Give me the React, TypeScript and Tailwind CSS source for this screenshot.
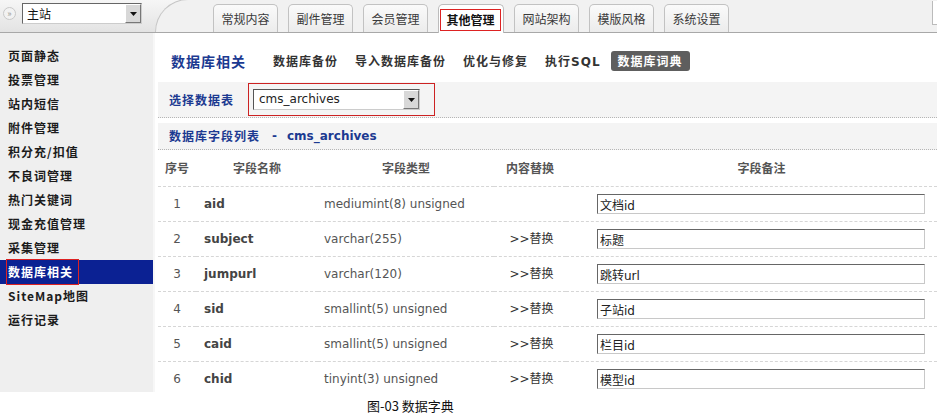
import React from "react";

const topTabs = ["常规内容", "副件管理", "会员管理", "其他管理", "网站架构", "模版风格", "系统设置"];

const menu = [
  "页面静态",
  "投票管理",
  "站内短信",
  "附件管理",
  "积分充/扣值",
  "不良词管理",
  "热门关键词",
  "现金充值管理",
  "采集管理",
  "数据库相关",
  "SiteMap地图",
  "运行记录",
];

const fields = [
  { no: 1, name: "aid", type: "mediumint(8) unsigned", replace: false, note: "文档id" },
  { no: 2, name: "subject", type: "varchar(255)", replace: true, note: "标题" },
  { no: 3, name: "jumpurl", type: "varchar(120)", replace: true, note: "跳转url" },
  { no: 4, name: "sid", type: "smallint(5) unsigned", replace: true, note: "子站id" },
  { no: 5, name: "caid", type: "smallint(5) unsigned", replace: true, note: "栏目id" },
  { no: 6, name: "chid", type: "tinyint(3) unsigned", replace: true, note: "模型id" },
];

const DropArrow = () => (
  <div className="w-[16px] h-full flex items-center justify-center bg-[#d8d8d8] border-l border-t border-white border-r border-b border-r-[#777] border-b-[#777]">
    <svg width="7" height="4" viewBox="0 0 7 4">
      <path d="M0 0h7L3.5 4z" fill="#111" />
    </svg>
  </div>
);

const TopBar = () => {
  return (
    <div className="h-[33px] flex border-b border-[#a8a8a8] bg-gradient-to-b from-[#f6f6f6] to-[#e3e3e3]">
      {/* site switch */}
      <div className="w-[155px] flex items-start pt-[3px] pl-[3px]">
        <div className="w-[13px] h-[13px] mt-[4px] rounded-full border border-[#c8c8c8] bg-[#f2f2f2] flex items-center justify-center text-[9px] leading-none text-[#999]">
          »
        </div>
        <div className="ml-[6px] w-[120px] h-[21px] flex bg-white border border-t-[#666] border-l-[#666] border-r-[#ccc] border-b-[#ccc]">
          <div className="flex-1 pl-[4px] text-[12px] leading-[19px] text-[#111]">主站</div>
          <DropArrow />
        </div>
      </div>

      {/* tabs */}
      <div className="flex-1 -mt-px flex items-end pl-[57px] gap-[10px] bg-[#f1f1f1] border-l border-t border-[#c6c6c6] rounded-tl-[34px]">
        {topTabs.map((t) =>
          t === "其他管理" ? (
            <div
              key={t}
              className="w-[66px] h-[29px] -mb-px rounded-t-[5px] border border-b-0 border-[#bcbcbc] bg-white flex items-end pb-[2px] pl-px"
            >
              <span className="w-[61px] h-[22px] border border-[#d22] flex items-center justify-center text-[12px] font-bold text-[#111]">
                {t}
              </span>
            </div>
          ) : (
            <div
              key={t}
              className="w-[65px] h-[28px] rounded-t-[5px] border border-b-0 border-[#c2c2c2] bg-gradient-to-b from-[#fafafa] to-[#ececec] flex items-center justify-center pt-px text-[12px] text-[#3a3a3a]"
            >
              {t}
            </div>
          )
        )}
        <div className="ml-auto self-start mt-px w-[5px] h-[24px] bg-white border-l border-b border-[#bbb]" />
      </div>
    </div>
  );
};

const Sidebar = () => {
  return (
    <div className="w-[153px] bg-[#efefef] pt-[11px]">
      {menu.map((m) =>
        m === "数据库相关" ? (
          <div key={m} className="h-[24px] bg-[#0b2193] flex items-center pl-[6px]">
            <span className="h-[26px] w-[73px] border border-[#d22] flex items-center pl-[1px] text-[12px] font-bold tracking-[1px] text-white">
              {m}
            </span>
          </div>
        ) : (
          <div key={m} className="h-[24px] flex items-center pl-[8px] text-[12px] font-bold tracking-[1px] text-[#1c1c1c]">
            {m}
          </div>
        )
      )}
    </div>
  );
};

const Content = () => {
  return (
    <div className="flex-1 bg-white border-l-2 border-[#f7f7f7] pl-[3px]">
      {/* sub nav */}
      <div className="h-[49px] pt-[7px] flex items-center pl-[13px]">
        <span className="text-[14px] font-bold tracking-[1px] text-[#1c3a91]">数据库相关</span>
        <div className="ml-[27px] flex items-center gap-[17px] text-[12px] font-bold tracking-[1px] text-[#333]">
          <span>数据库备份</span>
          <span>导入数据库备份</span>
          <span>优化与修复</span>
          <span>
            执行<span className="font-['DejaVu_Sans',sans-serif] tracking-[1px]">SQL</span>
          </span>
        </div>
        <span className="ml-[10px] h-[20px] px-[7px] rounded-[3px] bg-[#5e5e5e] flex items-center text-[12px] font-bold tracking-[1px] text-white">
          数据库词典
        </span>
      </div>

      {/* table select */}
      <div className="h-[36px] bg-[#f4f4f4] border-b border-dotted border-[#b5b5b5] flex items-center pl-[11px]">
        <span className="text-[12px] font-bold tracking-[1px] text-[#1c3a91]">选择数据表</span>
        <div className="ml-[14px] w-[187px] h-[33px] border border-[#cc2222] flex items-center pl-[4px]">
          <div className="w-[167px] h-[21px] flex bg-white border border-t-[#555] border-l-[#555] border-r-[#ccc] border-b-[#ccc]">
            <div className="flex-1 pl-[5px] text-[12px] leading-[19px] text-[#222] font-['DejaVu_Sans',sans-serif]">
              cms_archives
            </div>
            <DropArrow />
          </div>
        </div>
      </div>

      {/* list title */}
      <div className="mt-[5px] h-[27px] bg-[#f4f4f4] border-b border-dotted border-[#b5b5b5] flex items-center pl-[11px] text-[12px] font-bold text-[#1c3a91]">
        <span className="tracking-[1px]">数据库字段列表</span>
        <span className="ml-[12px] font-['DejaVu_Sans',sans-serif]">-</span>
        <span className="ml-[10px] font-['DejaVu_Sans',sans-serif]">cms_archives</span>
      </div>

      {/* field table */}
      <div className="grid grid-cols-[38px_122px_176px_72px_1fr] text-[12px]">
        <div className="h-[36px] flex items-center justify-center font-bold text-[#555]">序号</div>
        <div className="h-[36px] flex items-center justify-center font-bold text-[#555]">字段名称</div>
        <div className="h-[36px] flex items-center justify-center font-bold text-[#555]">字段类型</div>
        <div className="h-[36px] flex items-center justify-center font-bold text-[#555]">内容替换</div>
        <div className="h-[36px] flex items-center justify-center pl-[20px] font-bold text-[#555]">字段备注</div>

        {fields.map((f) => (
          <React.Fragment key={f.no}>
            <div className="h-[35px] border-t border-dashed border-[#d6d6d6] flex items-center justify-center text-[#555] font-['DejaVu_Sans',sans-serif]">
              {f.no}
            </div>
            <div className="h-[35px] border-t border-dashed border-[#d6d6d6] flex items-center pl-[8px] font-bold text-[#444] font-['DejaVu_Sans',sans-serif]">
              {f.name}
            </div>
            <div className="h-[35px] border-t border-dashed border-[#d6d6d6] flex items-center pl-[6px] text-[#555] font-['DejaVu_Sans',sans-serif]">
              {f.type}
            </div>
            <div className="h-[35px] border-t border-dashed border-[#d6d6d6] flex items-center justify-center pl-[3px] text-[#333] font-['DejaVu_Sans','Noto_Sans_CJK_SC',sans-serif]">
              {f.replace ? ">>替换" : ""}
            </div>
            <div className="h-[35px] border-t border-dashed border-[#d6d6d6] flex items-center pl-[31px]">
              <input
                readOnly
                defaultValue={f.note}
                className="w-[328px] h-[20px] px-[2px] bg-white border border-t-[#666] border-l-[#666] border-r-[#c8c8c8] border-b-[#c8c8c8] text-[12px] text-[#222] outline-none font-['DejaVu_Sans','Noto_Sans_CJK_SC',sans-serif]"
              />
            </div>
          </React.Fragment>
        ))}
      </div>
    </div>
  );
};

const App = () => {
  return (
    <div className="w-[937px] h-[420px] bg-white overflow-hidden font-['Noto_Sans_CJK_SC',sans-serif]">
      <div className="h-[392px] flex flex-col overflow-hidden">
        <TopBar />
        <div className="flex flex-1 min-h-0">
          <Sidebar />
          <Content />
        </div>
      </div>
      {/* caption */}
      <div className="h-[28px] flex items-center pl-[367px] text-[13px] text-[#111]">
        图-03 数据字典
      </div>
    </div>
  );
};

export default App;
